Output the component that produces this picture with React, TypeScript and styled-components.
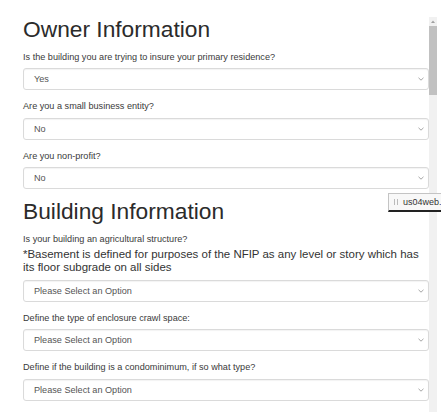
import React from "react";
import styled, { createGlobalStyle } from "styled-components";

const Global = createGlobalStyle`
  html, body { margin: 0; padding: 0; background: #fff; }
  body { font-family: "Liberation Sans", Arial, sans-serif; }
`;

const Page = styled.div`
  position: relative;
  width: 441px;
  height: 412px;
  overflow: hidden;
  display: flex;
  background: #fff;
`;

const Main = styled.div`
  flex: 1;
  min-width: 0;
  padding: 17px 0 0 23px;
`;

const Heading = styled.h1`
  margin: 0 0 8.5px;
  font-size: 22.75px;
  line-height: 25px;
  font-weight: 400;
  color: #2b2b2b;
`;

const Group = styled.div`
  margin-bottom: 10px;
`;

const Label = styled.label<{ $gap?: number }>`
  display: block;
  font-size: 9.15px;
  line-height: 13px;
  margin-bottom: ${(p) => (p.$gap ?? 4.5)}px;
  color: #3a3a3a;
`;

const Note = styled.p`
  margin: 0 0 5.5px;
  font-size: 11.47px;
  line-height: 13px;
  color: #333;
`;

const SelectBox = styled.div`
  box-sizing: border-box;
  height: 22px;
  display: flex;
  align-items: center;
  justify-content: space-between;
  padding: 0 4px 0 10px;
  border: 1px solid #dadada;
  border-radius: 3px;
  box-shadow: inset 0 1px 1px rgba(0, 0, 0, 0.05);
  font-size: 9.15px;
  color: #555;
`;

const Rail = styled.div`
  width: 8px;
  margin: 17px 4px 0 0;
  display: flex;
  flex-direction: column;
  background: #f1f1f1;
`;

const RailButton = styled.div`
  height: 9px;
  display: flex;
  align-items: center;
  justify-content: center;
`;

const Thumb = styled.div`
  height: 69px;
  background: #c1c1c1;
`;

const Toast = styled.div`
  position: absolute;
  left: 388px;
  top: 193px;
  box-sizing: border-box;
  width: 60px;
  height: 19px;
  display: flex;
  align-items: center;
  gap: 5px;
  padding-left: 5px;
  background: #f8f8f8;
  border: 1px solid #c4c4c4;
  border-bottom: 2px solid #222;
  font-size: 9px;
  color: #333;
`;

const Grip = styled.span`
  width: 2px;
  height: 6px;
  border-left: 1px solid #bbb;
  border-right: 1px solid #bbb;
`;

const Chevron = () => (
  <svg width="6" height="4" viewBox="0 0 6 4">
    <path d="M0.5 0.8 L3 3.2 L5.5 0.8" fill="none" stroke="#9a9a9a" strokeWidth="0.9" />
  </svg>
);

const Select = ({ value }: { value: string }) => (
  <SelectBox>
    <span>{value}</span>
    <Chevron />
  </SelectBox>
);

export default function App() {
  return (
    <Page>
      <Global />
      <Main>
        <Heading>Owner Information</Heading>
        <Group>
          <Label>Is the building you are trying to insure your primary residence?</Label>
          <Select value="Yes" />
        </Group>
        <Group>
          <Label>Are you a small business entity?</Label>
          <Select value="No" />
        </Group>
        <Group>
          <Label>Are you non-profit?</Label>
          <Select value="No" />
        </Group>
        <Heading>Building Information</Heading>
        <Group>
          <Label $gap={2.7}>Is your building an agricultural structure?</Label>
          <Note>
            *Basement is defined for purposes of the NFIP as any level or story which has its floor
            subgrade on all sides
          </Note>
          <Select value="Please Select an Option" />
        </Group>
        <Group>
          <Label>Define the type of enclosure crawl space:</Label>
          <Select value="Please Select an Option" />
        </Group>
        <Group>
          <Label>Define if the building is a condominimum, if so what type?</Label>
          <Select value="Please Select an Option" />
        </Group>
      </Main>
      <Rail>
        <RailButton>
          <svg width="4" height="3" viewBox="0 0 4 3">
            <path d="M0 3 L2 0.5 L4 3 Z" fill="#a0a0a0" />
          </svg>
        </RailButton>
        <Thumb />
      </Rail>
      <Toast>
        <Grip />
        <span>us04web.</span>
      </Toast>
    </Page>
  );
}
